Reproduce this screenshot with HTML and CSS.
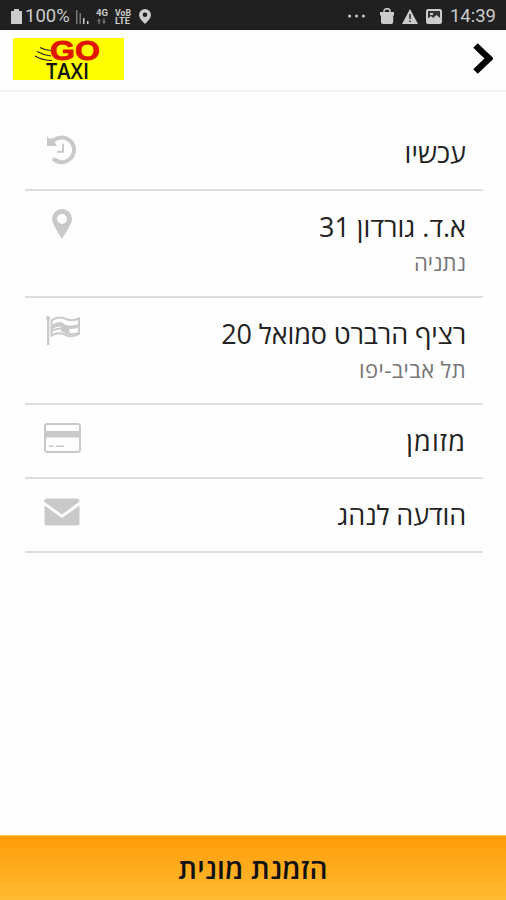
FILE: index.html
```html
<!DOCTYPE html>
<html lang="he" dir="rtl">
<head>
  <meta charset="UTF-8" />
  <title>Go Taxi</title>
  <link rel="stylesheet" href="styles.css">
</head>
<body>
  <!-- Phone status bar -->
  <div class="status-bar" dir="ltr">
    <svg class="battery" width="11" height="15" viewBox="0 0 11 15"><path d="M3 0h5v2h3v13H0V2h3z"/></svg>
    <span class="percent">100%</span>
    <svg class="signal" width="15" height="15" viewBox="0 0 15 15">
      <path class="dim" d="M1 1h1.500v14H1zM4.500 4H6v11H4.500z"/><path d="M8 9h1.500v6H8zM12 12h1.500v3H12z"/>
    </svg>
    <svg class="network" width="12" height="17" viewBox="0 0 12 17">
      <text x="0" y="8" textLength="12" lengthAdjust="spacingAndGlyphs">4G</text>
      <path class="dim" d="M1 13l2-2.500L5 13H3.700v3H2.300v-3zM6 13.500h1.300v-3h1.400v3H10L8 16z"/>
    </svg>
    <svg class="volte" width="16" height="17" viewBox="0 0 16 17">
      <text x="0" y="7.500" textLength="16" lengthAdjust="spacingAndGlyphs">VoB</text>
      <text x="0" y="16" textLength="15" lengthAdjust="spacingAndGlyphs">LTE</text>
    </svg>
    <svg class="location" width="12" height="15" viewBox="0 0 12 15"><path fill-rule="evenodd" d="M6 0a6 6 0 0 1 6 6c0 3-3 6-6 9-3-3-6-6-6-9a6 6 0 0 1 6-6zm0 3.500a2.300 2.300 0 1 0 0 4.600 2.300 2.300 0 0 0 0-4.600z"/></svg>
    <svg class="dots" width="17" height="4" viewBox="0 0 17 4"><circle cx="1.600" cy="2" r="1.500"/><circle cx="8.500" cy="2" r="1.500"/><circle cx="15.400" cy="2" r="1.500"/></svg>
    <svg class="bag" width="16" height="16" viewBox="0 0 16 16"><path d="M1 4h14v3.500h-.8V14q0 2-2 2H4q-2 0-2-2V7.500H1z"/><path class="handle" d="M5 5V3a3 2.300 0 0 1 6 0v2"/></svg>
    <svg class="warning" width="16" height="15" viewBox="0 0 16 15"><path d="M8 0l8 15H0z"/><path class="ink" d="M7.200 5h1.600v5H7.200zM7.200 11.500h1.600V13H7.200z"/></svg>
    <svg class="picture" width="16" height="15" viewBox="0 0 16 15"><rect width="16" height="15" rx="2"/><path class="ink" d="M2 2h12v7L10.500 6 7 9 5 7 2 9.500z"/><path d="M4 4h3v2H4z"/></svg>
    <span class="clock">14:39</span>
  </div>

  <header class="header">
    <svg class="chevron" width="20" height="31" viewBox="0 0 20 31"><path d="M2.500 2.500L16 15.500l-13.500 13"/></svg>
    <svg class="logo" width="111" height="42" viewBox="0 0 111 42" direction="ltr">
      <rect width="111" height="42"/>
      <path class="speed" d="M27 9.500q5 3 11 3M24 13.500q7 4 14 4.500M22 18q8 4.500 17 4.500"/>
      <text class="go" x="37" y="21.500" textLength="50" lengthAdjust="spacingAndGlyphs">GO</text>
      <text class="taxi" x="33" y="40.500" textLength="43" lengthAdjust="spacingAndGlyphs">TAXI</text>
    </svg>
  </header>

  <main class="order">
    <div class="row">
      <div class="title">עכשיו</div>
      <svg class="icon" width="40" height="34" viewBox="0 0 40 34">
        <path class="line thick" d="M9.500 10A12.300 12.300 0 1 1 11 25.500"/>
        <path d="M5 3.500l3 2.500 2-1.500 5 8.500H5z"/>
        <path class="line" d="M21 10.500v8.200h-6"/>
      </svg>
    </div>
    <div class="row tall">
      <div class="title">א.ד. גורדון 31<div class="city">נתניה</div></div>
      <svg class="icon" width="40" height="34" viewBox="0 0 40 34">
        <path fill-rule="evenodd" d="M20 2a10 10 0 0 1 10 10c0 4.500-6.500 14-10 20-3.500-6-10-15.500-10-20A10 10 0 0 1 20 2zm0 5a5 5 0 1 0 0 10 5 5 0 0 0 0-10z"/>
      </svg>
    </div>
    <div class="row tall">
      <div class="title long">רציף הרברט סמואל 20<div class="city wide">תל אביב-יפו</div></div>
      <svg class="icon" width="40" height="34" viewBox="0 0 40 34">
        <circle cx="6" cy="4" r="2"/>
        <path d="M5 4h2.300v27H5z"/>
        <path class="line" d="M9.500 6.500q7-5 13.500-1.800t14-.2v15.500q-7 4-13.500.8t-14 .7z"/>
        <path d="M10 11q4-3.500 9-3l5 3q4 2 12.500-1v3.500q-5 2-9 1.500v4q5 .5 9-1v2q-8 2-12.500 0l-5-3v-4.500q-5-.5-9 3z"/>
        <path class="line" d="M10 17q5-3 9-2.500"/>
      </svg>
    </div>
    <div class="row">
      <div class="title cash">מזומן</div>
      <svg class="icon" width="40" height="34" viewBox="0 0 40 34">
        <rect class="line" x="3" y="3" width="35" height="28" rx="2.500"/>
        <path d="M3 10h35v6.500H3zM7 24.500h4.500V26H7zM14 24.500h8V26h-8z"/>
      </svg>
    </div>
    <div class="row">
      <div class="title long">הודעה לנהג</div>
      <svg class="icon" width="40" height="34" viewBox="0 0 40 34">
        <path d="M5 3.500h30a2.500 2.500 0 0 1 2.500 3L20 19.500 2.500 7A2.500 2.500 0 0 1 5 3.500z"/>
        <path d="M2.500 10.500L20 23l17.500-12.500V28a2.500 2.500 0 0 1-2.500 2.500H5A2.500 2.500 0 0 1 2.500 28z"/>
      </svg>
    </div>
  </main>

  <button class="order-btn">הזמנת מונית</button>
</body>
</html>
```

FILE: styles.css
```css
* { box-sizing: border-box; margin: 0; padding: 0; }
body {
  display: flex; flex-direction: column;
  height: 100vh;
  overflow: hidden;
  background: #fefefe;
  font-family: "Open Sans", "Noto Sans", sans-serif;
}
svg { display: block; flex: none; }

/* Status bar */
.status-bar {
  display: flex; align-items: center;
  height: 30px;
  padding: 2px 10px 0 11px;
  background: #202020;
  color: #ccc;
  font-family: Roboto, sans-serif;
  font-size: 18.5px;
}
.status-bar svg { fill: #ccc; }
.status-bar .dim { fill: #777; }
.status-bar .ink { fill: #333; }
.status-bar text { font-size: 8.5px; font-weight: 700; }
.percent { width: 47px; margin-left: 3px; }
.signal { margin-left: 3px; }
.network { margin-left: 6px; }
.volte { margin-left: 7px; }
.location { margin-left: 8px; }
.dots { margin-left: auto; }
.bag { margin-left: 14px; }
.bag .handle { fill: none; stroke: #ccc; stroke-width: 1.5; }
.warning { margin-left: 7px; }
.picture { margin-left: 8px; }
.clock { margin-left: 8px; }

/* Header */
.header {
  display: flex; justify-content: space-between; align-items: flex-start;
  height: 62px;
  padding: 8px 13px 0;
  border-bottom: 2px solid #f3f5f6;
}
.chevron { margin-top: 5px; fill: none; stroke: #000; stroke-width: 6.5; }
.logo { overflow: visible; }
.logo rect { fill: #ff0; }
.logo .go {
  fill: #df1500; stroke: #df1500; stroke-width: 0.8;
  font: 700 27px "Liberation Sans", sans-serif;
}
.logo .taxi { fill: #111; font: 600 21px "Open Sans", sans-serif; }
.speed { fill: none; stroke: #222; stroke-width: 1.2; }

/* Order details */
.order { flex: 1; padding: 25px 23px 0 25px; }
.row {
  display: flex; justify-content: space-between; align-items: flex-start;
  height: 74px;
  padding: 16px 17px 0;
  border-bottom: 2px solid #dedede;
}
.row.tall { height: 107px; }
.title { font-size: 27px; line-height: 40px; color: #222; }
.title.long { letter-spacing: -0.12px; }
.title.cash { letter-spacing: 1.1px; }
.city { font-size: 22px; line-height: 30px; color: #777; }
.city.wide { letter-spacing: 0.4px; }
.icon { fill: #c9c9c9; }
.icon .line { fill: none; stroke: #c9c9c9; stroke-width: 2; }
.icon .thick { stroke-width: 4; }

.order-btn {
  height: 65px;
  border: none;
  border-top: 1px solid #ffc35a;
  background: linear-gradient(#ff9c08, #ffbb32);
  color: #111;
  font-family: inherit;
  font-size: 28px; font-weight: 600;
  letter-spacing: 0.2px;
}
```
